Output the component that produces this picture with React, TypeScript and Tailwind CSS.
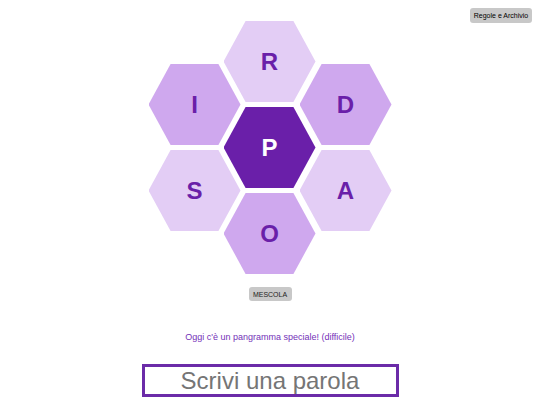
import React from "react";

const hexes = [
  { l: "R", x: "left-[75px]", y: "top-0", bg: "bg-[#e3cdf5]", c: "text-[#6a1fa9]" },
  { l: "I", x: "left-0", y: "top-[43px]", bg: "bg-[#cfa8ee]", c: "text-[#6a1fa9]" },
  { l: "D", x: "left-[151px]", y: "top-[43px]", bg: "bg-[#cfa8ee]", c: "text-[#6a1fa9]" },
  { l: "P", x: "left-[75px]", y: "top-[86px]", bg: "bg-[#6a1fa9]", c: "text-white" },
  { l: "S", x: "left-0", y: "top-[129px]", bg: "bg-[#e3cdf5]", c: "text-[#6a1fa9]" },
  { l: "A", x: "left-[151px]", y: "top-[129px]", bg: "bg-[#e3cdf5]", c: "text-[#6a1fa9]" },
  { l: "O", x: "left-[75px]", y: "top-[172px]", bg: "bg-[#cfa8ee]", c: "text-[#6a1fa9]" },
];

export default function App() {
  return (
    <div
      className="relative w-[540px] h-[405px] bg-white overflow-hidden flex flex-col items-center"
      style={{ fontFamily: '"Liberation Sans", Arial, sans-serif' }}
    >
      <button className="absolute top-[8px] right-[8px] w-[62px] h-[15px] rounded-[3px] bg-[#c8c8c8] text-[7px] leading-none text-black flex items-center justify-center">
        Regole e Archivio
      </button>
      <div className="relative w-[243px] h-[253px] mt-[21px]">
        {hexes.map((h) => (
          <div
            key={h.l}
            className={`absolute ${h.x} ${h.y} w-[92px] h-[81px] ${h.bg} flex items-center justify-center [clip-path:polygon(24%_0,76%_0,100%_50%,76%_100%,24%_100%,0_50%)]`}
          >
            <span className={`${h.c} text-[24px] font-bold leading-none`}>{h.l}</span>
          </div>
        ))}
      </div>
      <button className="mt-[13px] w-[43px] h-[14px] rounded-[3px] bg-[#c8c8c8] text-[7px] leading-none text-[#222] flex items-center justify-center">
        MESCOLA
      </button>
      <div className="mt-[31px] text-[9px] leading-[10px] text-[#7431b8]">
        Oggi c'è un pangramma speciale! (difficile)
      </div>
      <div className="mt-[22px] w-[257px] h-[33px] border-[3px] border-[#6b2ba8] flex items-center justify-center">
        <span className="text-[24px] leading-none text-[#757575]">Scrivi una parola</span>
      </div>
    </div>
  );
}
